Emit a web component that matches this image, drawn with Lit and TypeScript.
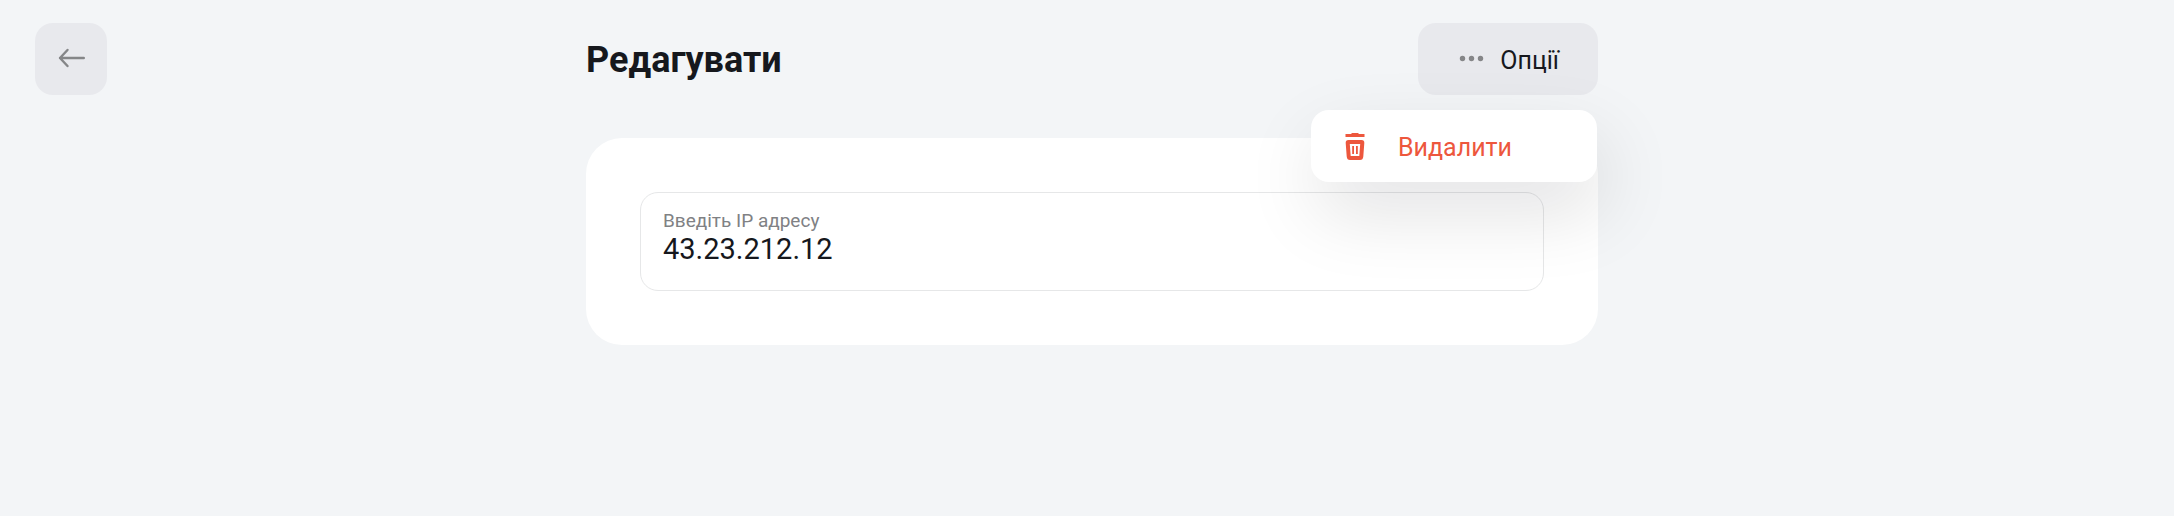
import { LitElement, html, css } from "lit";
import { customElement, state } from "lit/decorators.js";

@customElement("app-root")
export class AppRoot extends LitElement {
  @state() private menuOpen = true;
  @state() private address = "43.23.212.12";

  static styles = css`
    :host {
      display: block;
      box-sizing: border-box;
      min-height: 100vh;
      padding: 23px 25px 23px 35px;
      background: #f3f5f7;
      color: #16181d;
      font-family: Roboto, "Noto Sans", sans-serif;
    }
    .page {
      display: grid;
      grid-template-columns: minmax(72px, 1fr) minmax(0, 1012px) minmax(0, 1fr);
      align-items: start;
    }
    button {
      display: flex;
      align-items: center;
      border: 0;
      margin: 0;
      font: inherit;
      color: inherit;
      cursor: pointer;
    }
    svg {
      display: block;
      flex: none;
    }
    .back {
      justify-content: center;
      width: 72px;
      height: 72px;
      padding: 0 0 2px 0;
      border-radius: 18px;
      background: #e8e9ed;
    }
    .content {
      display: flex;
      flex-direction: column;
      gap: 43px;
    }
    .header {
      display: flex;
      align-items: center;
      justify-content: space-between;
    }
    h1 {
      margin: 0;
      padding-top: 2px;
      font-size: 36px;
      line-height: 42px;
      font-weight: 700;
    }
    .options {
      position: relative;
    }
    .toggle {
      gap: 16px;
      height: 72px;
      padding: 4px 39px 0 40px;
      border-radius: 18px;
      background: #e8e9ed;
      font-size: 25px;
      line-height: 32px;
    }
    .menu {
      position: absolute;
      z-index: 1;
      top: calc(100% + 15px);
      right: 1px;
      width: 286px;
      margin: 0;
      padding: 0;
      list-style: none;
      border-radius: 18px;
      background: #fff;
      box-shadow: 6px 30px 76px rgba(0, 8, 16, 0.12);
    }
    .delete {
      gap: 33px;
      width: 100%;
      height: 72px;
      padding: 4px 34px 0;
      background: none;
      color: #ed573d;
      font-size: 25px;
      line-height: 32px;
    }
    .card {
      padding: 54px;
      border-radius: 36px;
      background: #fff;
    }
    .field {
      display: flex;
      flex-direction: column;
      padding: 16px 22px 24px;
      border: 1px solid #e6e7e8;
      border-radius: 18px;
    }
    label {
      color: #808184;
      font-size: 19px;
      line-height: 24px;
    }
    input {
      width: 100%;
      height: 33px;
      margin: 0;
      padding: 0;
      border: 0;
      outline: 0;
      background: none;
      color: inherit;
      font: inherit;
      font-size: 29px;
      line-height: 33px;
    }
  `;

  private toggleMenu() {
    this.menuOpen = !this.menuOpen;
  }

  private onInput(event: Event) {
    this.address = (event.target as HTMLInputElement).value;
  }

  private clear() {
    this.address = "";
    this.menuOpen = false;
  }

  render() {
    return html`
      <div class="page">
        <button class="back" type="button" aria-label="Назад">
          <svg width="28" height="20" viewBox="0 0 28 20" fill="none" stroke="#858688" stroke-width="2.4" stroke-linecap="round" stroke-linejoin="round">
            <path d="M26.8 10H3M10.5 2L3 10l7.5 8" />
          </svg>
        </button>
        <main class="content">
          <header class="header">
            <h1>Редагувати</h1>
            <div class="options">
              <button class="toggle" type="button" aria-haspopup="true" aria-expanded=${this.menuOpen} @click=${this.toggleMenu}>
                <svg width="26" height="14" viewBox="0 0 26 14" fill="#858688">
                  <circle cx="4.5" cy="4.5" r="2.7" />
                  <circle cx="13.5" cy="4.5" r="2.7" />
                  <circle cx="22.5" cy="4.5" r="2.7" />
                </svg>
                Опції
              </button>
              ${this.menuOpen
                ? html`<ul class="menu">
                    <li>
                      <button class="delete" type="button" @click=${this.clear}>
                        <svg width="20" height="30" viewBox="0 0 20 30" fill="currentColor">
                          <path d="M6.500 0h7v1H19.500v3H0.500V1H6.500z" />
                          <path fill-rule="evenodd" d="M3.500 7h13q3 0 2.800 3l-1 13.500q-.3 3.500-3.300 3.500H5q-3 0-3.300-3.500L.7 10Q.5 7 3.500 7zM4.800 11l.9 12h8.600L15.200 11z" />
                          <path d="M7.200 13h1.800v8H7.200zM11 13h1.800v8h-1.800z" />
                        </svg>
                        Видалити
                      </button>
                    </li>
                  </ul>`
                : null}
            </div>
          </header>
          <section class="card">
            <div class="field">
              <label for="ip">Введіть IP адресу</label>
              <input id="ip" type="text" .value=${this.address} @input=${this.onInput} />
            </div>
          </section>
        </main>
      </div>
    `;
  }
}
